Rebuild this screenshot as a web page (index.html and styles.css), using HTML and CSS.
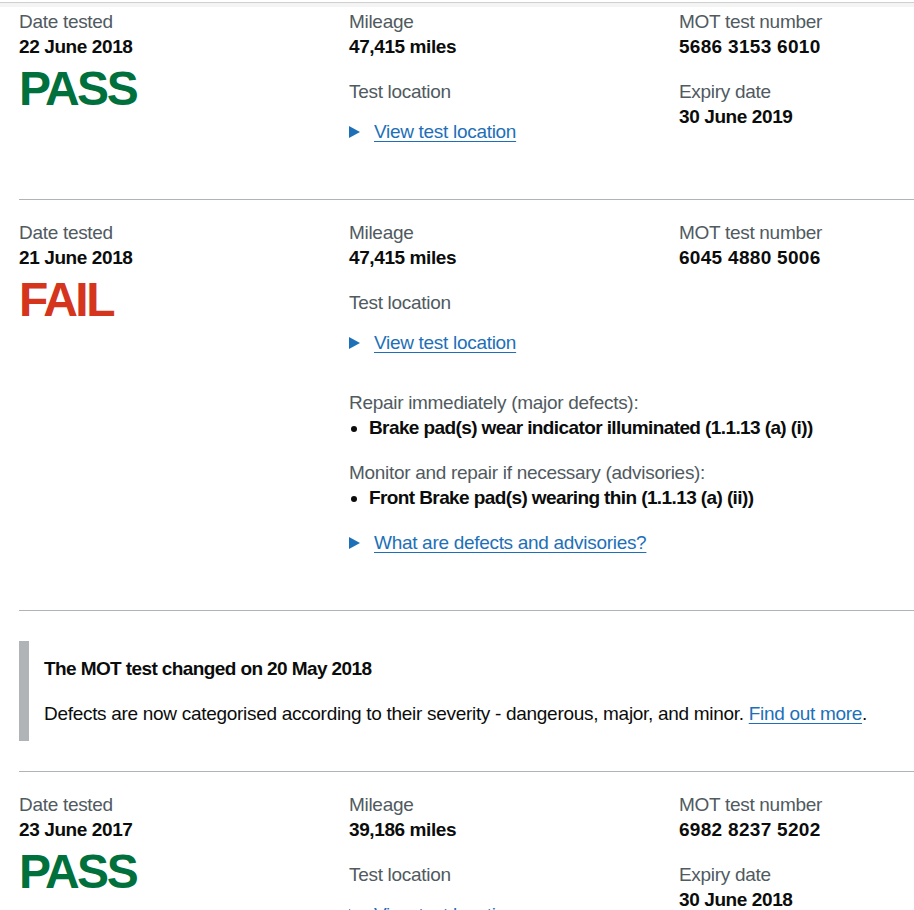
FILE: index.html
```html
<!DOCTYPE html>
<html lang="en">
<head>
  <meta charset="UTF-8">
  <title>MOT history</title>
  <link rel="stylesheet" href="styles.css">
</head>
<body>

  <div class="top-strip"></div>

  <div class="page">
    <div class="container">

      <div class="result first">
        <div class="col">
          <p class="label">Date tested</p>
          <p class="value">22 June 2018</p>
          <p class="status pass">PASS</p>
        </div>
        <div class="col">
          <p class="label">Mileage</p>
          <p class="value">47,415 miles</p>
          <p class="label spaced">Test location</p>
          <div class="details">
            <span class="arrow"></span>
            <a href="#">View test location</a>
          </div>
        </div>
        <div class="col">
          <p class="label">MOT test number</p>
          <p class="value number">5686 3153 6010</p>
          <p class="label spaced">Expiry date</p>
          <p class="value">30 June 2019</p>
        </div>
      </div>

      <div class="result">
        <div class="col">
          <p class="label">Date tested</p>
          <p class="value">21 June 2018</p>
          <p class="status fail">FAIL</p>
        </div>
        <div class="col">
          <p class="label">Mileage</p>
          <p class="value">47,415 miles</p>
          <p class="label spaced">Test location</p>
          <div class="details">
            <span class="arrow"></span>
            <a href="#">View test location</a>
          </div>

          <div class="defects">
            <p class="label">Repair immediately (major defects):</p>
            <ul>
              <li>Brake pad(s) wear indicator illuminated (1.1.13 (a) (i))</li>
            </ul>
            <p class="label">Monitor and repair if necessary (advisories):</p>
            <ul>
              <li>Front Brake pad(s) wearing thin (1.1.13 (a) (ii))</li>
            </ul>
            <div class="details">
              <span class="arrow"></span>
              <a href="#">What are defects and advisories?</a>
            </div>
          </div>
        </div>
        <div class="col">
          <p class="label">MOT test number</p>
          <p class="value number">6045 4880 5006</p>
        </div>
      </div>

      <div class="notice">
        <div class="inset">
          <h4>The MOT test changed on 20 May 2018</h4>
          <p>Defects are now categorised according to their severity - dangerous, major, and minor. <a href="#">Find out more</a>.</p>
        </div>
      </div>

      <div class="result">
        <div class="col">
          <p class="label">Date tested</p>
          <p class="value">23 June 2017</p>
          <p class="status pass">PASS</p>
        </div>
        <div class="col">
          <p class="label">Mileage</p>
          <p class="value">39,186 miles</p>
          <p class="label spaced">Test location</p>
          <div class="details">
            <span class="arrow"></span>
            <a href="#">View test location</a>
          </div>
        </div>
        <div class="col">
          <p class="label">MOT test number</p>
          <p class="value number">6982 8237 5202</p>
          <p class="label spaced">Expiry date</p>
          <p class="value">30 June 2018</p>
        </div>
      </div>

    </div>
  </div>

</body>
</html>
```

FILE: styles.css
```css
body {
  margin: 0;
  font-family: "Liberation Sans", Arial, sans-serif;
  font-size: 19px;
  line-height: 25px;
  letter-spacing: -0.3px;
  color: #0b0c0c;
  background: #fff;
  overflow: hidden;
}

p, h4, ul {
  margin: 0;
}

a {
  color: #1d70b8;
  text-decoration: underline;
  text-underline-offset: 3px;
  text-decoration-thickness: 1px;
}

.top-strip {
  margin-top: 2px;
  height: 4px;
  border-top: 1px solid #cfcfcf;
  background: #f4f4f4;
}

.page {
  padding-left: 19px;
  overflow: hidden;
}

.container {
  width: 990px;
}

/* one MOT test row */
.result {
  display: grid;
  grid-template-columns: 330px 330px 330px;
  padding: 20px 0 55px;
  border-top: 1px solid #b1b4b6;
}

.result.first {
  border-top: none;
  padding-top: 2px;
}

.label {
  color: #505a5f;
}

.value {
  font-weight: bold;
  letter-spacing: -0.4px;
}

.value.number {
  letter-spacing: 0.3px;
}

.spaced {
  margin-top: 20px;
}

.status {
  margin-top: 5px;
  font-size: 48px;
  line-height: 50px;
  font-weight: bold;
  letter-spacing: -2.5px;
}

.pass {
  color: #00703c;
}

.fail {
  color: #d4351c;
}

.details {
  margin-top: 15px;
  display: flex;
  align-items: center;
}

.arrow {
  width: 0;
  height: 0;
  border-top: 6px solid transparent;
  border-bottom: 6px solid transparent;
  border-left: 11px solid #1d70b8;
  margin-right: 14px;
}

.defects {
  margin-top: 35px;
  white-space: nowrap;
}

.defects ul {
  padding-left: 20px;
  margin-bottom: 20px;
  font-weight: bold;
  letter-spacing: -0.6px;
}

.defects .details {
  margin-top: 0;
}

/* notice about the 2018 changes */
.notice {
  border-top: 1px solid #b1b4b6;
  padding: 30px 0;
}

.inset {
  border-left: 10px solid #b1b4b6;
  padding: 15px;
}

.inset h4 {
  font-weight: bold;
  letter-spacing: -0.6px;
  margin-bottom: 20px;
}
```
